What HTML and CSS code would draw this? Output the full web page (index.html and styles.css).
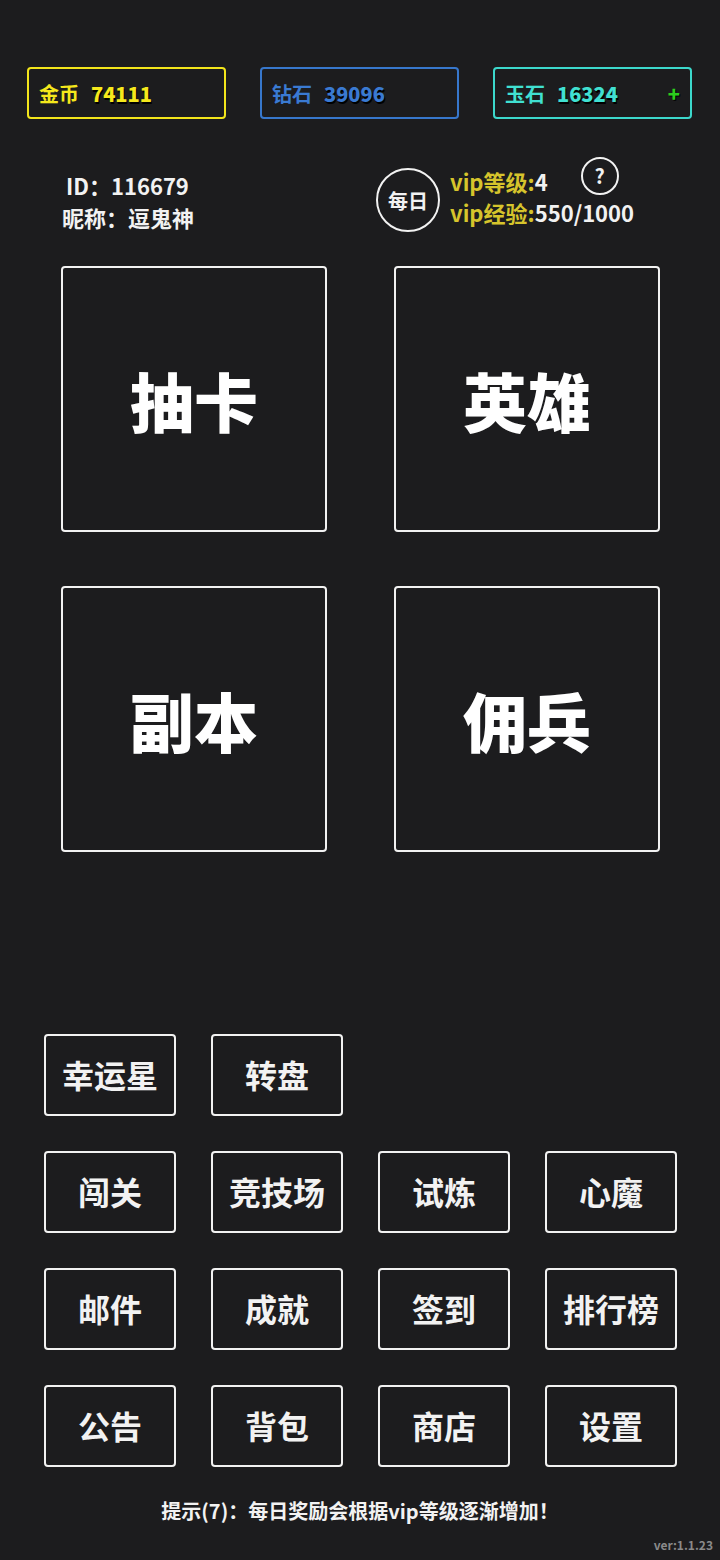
FILE: index.html
```html
<!DOCTYPE html>
<html lang="zh-CN">
<head>
    <meta charset="UTF-8">
    <meta name="viewport" content="width=device-width, initial-scale=1.0">
    <title>主页</title>
    <link rel="stylesheet" href="styles.css">
</head>
<body>
    <div class="page">
        <!-- Currency bar -->
        <div class="currency-bar">
            <div class="currency gold"><span class="label">金币</span><span class="amount">74111</span></div>
            <div class="currency diamond"><span class="label">钻石</span><span class="amount">39096</span></div>
            <div class="currency jade"><span class="label">玉石</span><span class="amount">16324</span><span class="plus">+</span></div>
        </div>

        <!-- Player info -->
        <div class="profile">
            <div class="player">
                <div>ID：116679</div>
                <div>昵称：逗鬼神</div>
            </div>
            <div class="daily">每日</div>
            <div class="vip">
                <div class="vip-line">
                    <span class="vip-key">vip等级:</span><span>4</span>
                    <span class="help">?</span>
                </div>
                <div class="vip-line">
                    <span class="vip-key">vip经验:</span><span>550/1000</span>
                </div>
            </div>
        </div>

        <!-- Main entries -->
        <div class="main-grid">
            <div class="big-btn">抽卡</div>
            <div class="big-btn">英雄</div>
            <div class="big-btn">副本</div>
            <div class="big-btn">佣兵</div>
        </div>

        <!-- Feature buttons -->
        <div class="small-grid">
            <div class="small-btn">幸运星</div>
            <div class="small-btn">转盘</div>
            <div class="empty"></div>
            <div class="empty"></div>
            <div class="small-btn">闯关</div>
            <div class="small-btn">竞技场</div>
            <div class="small-btn">试炼</div>
            <div class="small-btn">心魔</div>
            <div class="small-btn">邮件</div>
            <div class="small-btn">成就</div>
            <div class="small-btn">签到</div>
            <div class="small-btn">排行榜</div>
            <div class="small-btn">公告</div>
            <div class="small-btn">背包</div>
            <div class="small-btn">商店</div>
            <div class="small-btn">设置</div>
        </div>

        <p class="tip">提示(7)：每日奖励会根据vip等级逐渐增加！</p>
        <div class="version">ver:1.1.23</div>
    </div>
</body>
</html>
```

FILE: styles.css
```css
/* Game home screen */
body {
    margin: 0;
    padding: 0;
    background-color: #1c1c1e;
    color: #f2f2f2;
    font-family: "Noto Sans CJK SC", "Noto Sans", sans-serif;
    font-weight: 700;
}

.page {
    width: 720px;
    height: 1560px;
    display: flex;
    flex-direction: column;
    box-sizing: border-box;
}

/* Currency */
.currency-bar {
    display: flex;
    gap: 34px;
    padding: 67px 0 0 27px;
}

.currency {
    width: 199px;
    height: 52px;
    box-sizing: border-box;
    border: 2px solid;
    border-radius: 4px;
    display: flex;
    align-items: center;
    padding: 0 10px;
    font-size: 20px;
}

.currency .amount {
    margin-left: 12px;
    font-weight: 900;
    text-shadow: 1px 2px 0 #000;
}

.gold {
    border-color: #f2e51b;
    color: #f5e81c;
}

.diamond {
    border-color: #3777cc;
    color: #3a7ad2;
}

.jade {
    border-color: #3cd8cc;
    color: #40e0d2;
}

.plus {
    margin-left: auto;
    color: #2ccc1e;
    font-weight: 900;
    font-size: 20px;
    text-shadow: 1px 1px 0 #000;
}

/* Profile */
.profile {
    display: flex;
    height: 76px;
    margin-top: 38px;
}

.player {
    width: 376px;
    flex-shrink: 0;
    box-sizing: border-box;
    padding: 12px 0 0 62px;
    font-size: 22px;
    line-height: 32px;
}

.player div:first-child {
    padding-left: 4px;
}

.daily {
    width: 64px;
    height: 64px;
    flex-shrink: 0;
    margin-top: 11px;
    box-sizing: border-box;
    border: 2px solid #f2f2f2;
    border-radius: 50%;
    display: flex;
    align-items: center;
    justify-content: center;
    font-size: 20px;
}

.vip {
    margin-left: 10px;
    padding-top: 9px;
    font-size: 22px;
    line-height: 31px;
}

.vip-line {
    display: flex;
    align-items: flex-start;
}

.vip-key {
    color: #d6c42c;
}

.help {
    width: 38px;
    height: 38px;
    box-sizing: border-box;
    margin: -9px 0 0 33px;
    border: 2px solid #f2f2f2;
    border-radius: 50%;
    display: flex;
    align-items: center;
    justify-content: center;
    font-size: 20px;
    line-height: 1;
}

/* Main grid */
.main-grid {
    display: grid;
    grid-template-columns: 266px 266px;
    grid-auto-rows: 266px;
    column-gap: 67px;
    row-gap: 54px;
    margin: 33px 0 0 61px;
}

.big-btn {
    border: 2px solid #f2f2f2;
    border-radius: 4px;
    display: flex;
    align-items: center;
    justify-content: center;
    font-size: 64px;
    font-weight: 900;
    color: #ffffff;
}

/* Small grid */
.small-grid {
    display: grid;
    grid-template-columns: repeat(4, 132px);
    grid-auto-rows: 82px;
    column-gap: 35px;
    row-gap: 35px;
    margin: 182px 0 0 44px;
}

.small-btn {
    border: 2px solid #f2f2f2;
    border-radius: 4px;
    display: flex;
    align-items: center;
    justify-content: center;
    font-size: 32px;
    padding-bottom: 3px;
}

.tip {
    margin: 31px 0 0 0;
    text-align: center;
    font-size: 20px;
    line-height: 26px;
}

.version {
    margin: 12px 7px 0 0;
    text-align: right;
    font-size: 12px;
    color: #8a8a8a;
}
```
